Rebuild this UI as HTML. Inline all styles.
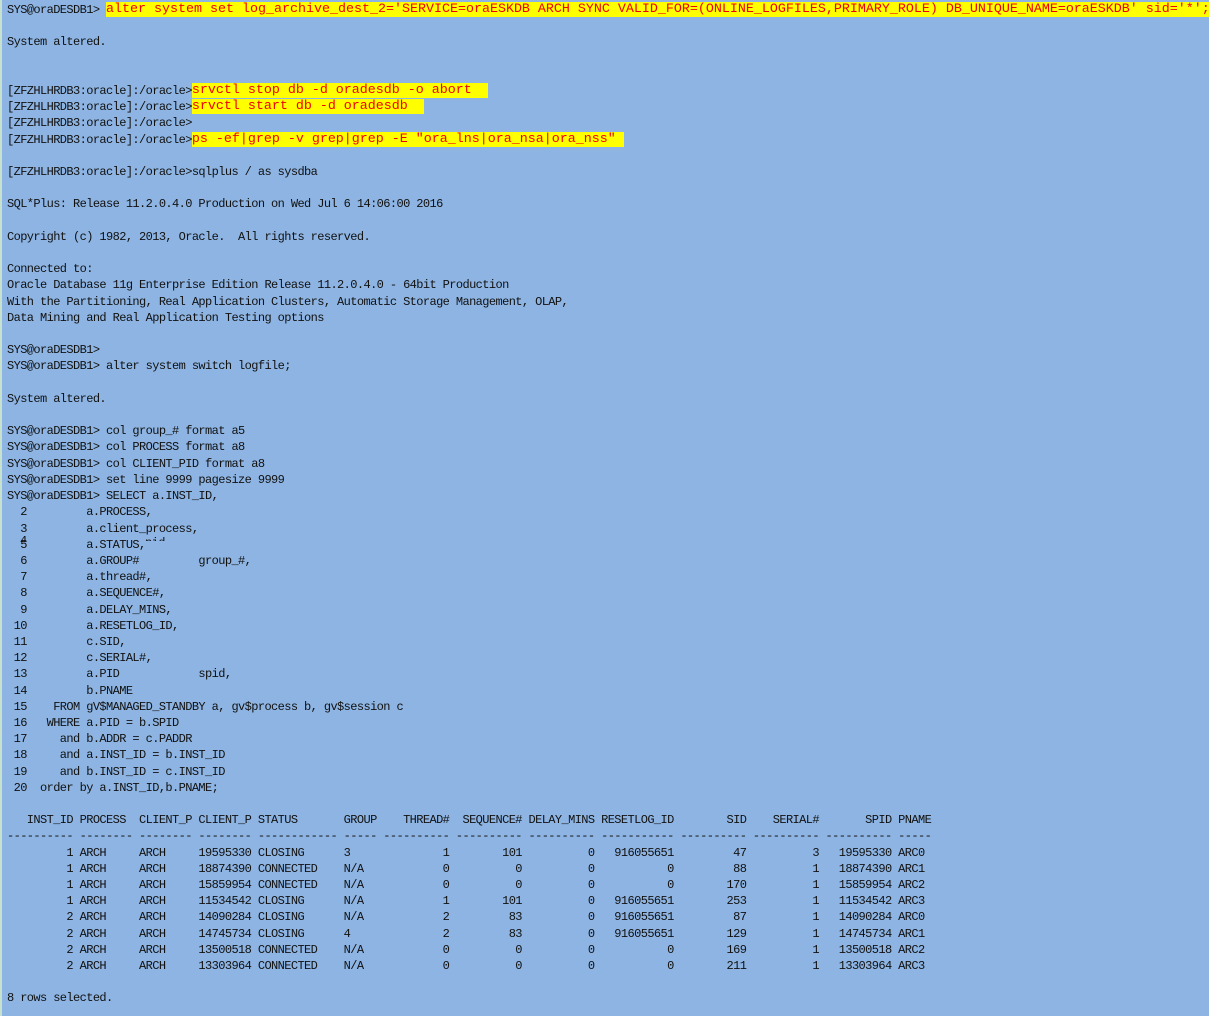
<!DOCTYPE html>
<html><head><meta charset="utf-8"><style>
html,body{margin:0;padding:0;}
body{width:1209px;height:1016px;overflow:hidden;background:#8db4e2;position:relative;}
.lb{position:absolute;left:0;top:0;width:2px;height:1016px;background:#c6e2cf;}
pre{margin:0;position:absolute;left:7px;top:2px;font-family:"Liberation Mono","DejaVu Sans Mono",monospace;font-size:12px;letter-spacing:-0.6px;line-height:16.2px;color:#111;}
.h{display:inline-block;height:15px;line-height:15px;vertical-align:top;background:#ffff00;color:#f00000;font-size:13.33px;letter-spacing:0;}
.ov{position:absolute;font-family:"Liberation Mono",monospace;font-size:12px;letter-spacing:-0.6px;line-height:16px;color:#111;}
</style></head><body><div class="lb"></div>
<pre>SYS@oraDESDB1> <span class="h">alter system set log_archive_dest_2='SERVICE=oraESKDB ARCH SYNC VALID_FOR=(ONLINE_LOGFILES,PRIMARY_ROLE) DB_UNIQUE_NAME=oraESKDB' sid='*';</span>

System altered.


[ZFZHLHRDB3:oracle]:/oracle&gt;<span class="h">srvctl stop db -d oradesdb -o abort  </span>
[ZFZHLHRDB3:oracle]:/oracle&gt;<span class="h">srvctl start db -d oradesdb  </span>
[ZFZHLHRDB3:oracle]:/oracle&gt;
[ZFZHLHRDB3:oracle]:/oracle&gt;<span class="h">ps -ef|grep -v grep|grep -E "ora_lns|ora_nsa|ora_nss" </span>

[ZFZHLHRDB3:oracle]:/oracle&gt;sqlplus / as sysdba

SQL*Plus: Release 11.2.0.4.0 Production on Wed Jul 6 14:06:00 2016

Copyright (c) 1982, 2013, Oracle.  All rights reserved.

Connected to:
Oracle Database 11g Enterprise Edition Release 11.2.0.4.0 - 64bit Production
With the Partitioning, Real Application Clusters, Automatic Storage Management, OLAP,
Data Mining and Real Application Testing options

SYS@oraDESDB1>
SYS@oraDESDB1> alter system switch logfile;

System altered.

SYS@oraDESDB1> col group_# format a5
SYS@oraDESDB1> col PROCESS format a8
SYS@oraDESDB1> col CLIENT_PID format a8
SYS@oraDESDB1> set line 9999 pagesize 9999
SYS@oraDESDB1> SELECT a.INST_ID,
  2         a.PROCESS,
  3         a.client_process,
  5         a.STATUS,
  6         a.GROUP#         group_#,
  7         a.thread#,
  8         a.SEQUENCE#,
  9         a.DELAY_MINS,
 10         a.RESETLOG_ID,
 11         c.SID,
 12         c.SERIAL#,
 13         a.PID            spid,
 14         b.PNAME
 15    FROM gV$MANAGED_STANDBY a, gv$process b, gv$session c
 16   WHERE a.PID = b.SPID
 17     and b.ADDR = c.PADDR
 18     and a.INST_ID = b.INST_ID
 19     and b.INST_ID = c.INST_ID
 20  order by a.INST_ID,b.PNAME;

   INST_ID PROCESS  CLIENT_P CLIENT_P STATUS       GROUP    THREAD#  SEQUENCE# DELAY_MINS RESETLOG_ID        SID    SERIAL#       SPID PNAME
---------- -------- -------- -------- ------------ ----- ---------- ---------- ---------- ----------- ---------- ---------- ---------- -----
         1 ARCH     ARCH     19595330 CLOSING      3              1        101          0   916055651         47          3   19595330 ARC0
         1 ARCH     ARCH     18874390 CONNECTED    N/A            0          0          0           0         88          1   18874390 ARC1
         1 ARCH     ARCH     15859954 CONNECTED    N/A            0          0          0           0        170          1   15859954 ARC2
         1 ARCH     ARCH     11534542 CLOSING      N/A            1        101          0   916055651        253          1   11534542 ARC3
         2 ARCH     ARCH     14090284 CLOSING      N/A            2         83          0   916055651         87          1   14090284 ARC0
         2 ARCH     ARCH     14745734 CLOSING      4              2         83          0   916055651        129          1   14745734 ARC1
         2 ARCH     ARCH     13500518 CONNECTED    N/A            0          0          0           0        169          1   13500518 ARC2
         2 ARCH     ARCH     13303964 CONNECTED    N/A            0          0          0           0        211          1   13303964 ARC3

8 rows selected.</pre>
<div class="ov" style="left:20px;top:533px;height:9px;overflow:hidden;">4</div>
<div class="ov" style="left:145px;top:535px;height:6px;overflow:hidden;">pid</div>
</body></html>
